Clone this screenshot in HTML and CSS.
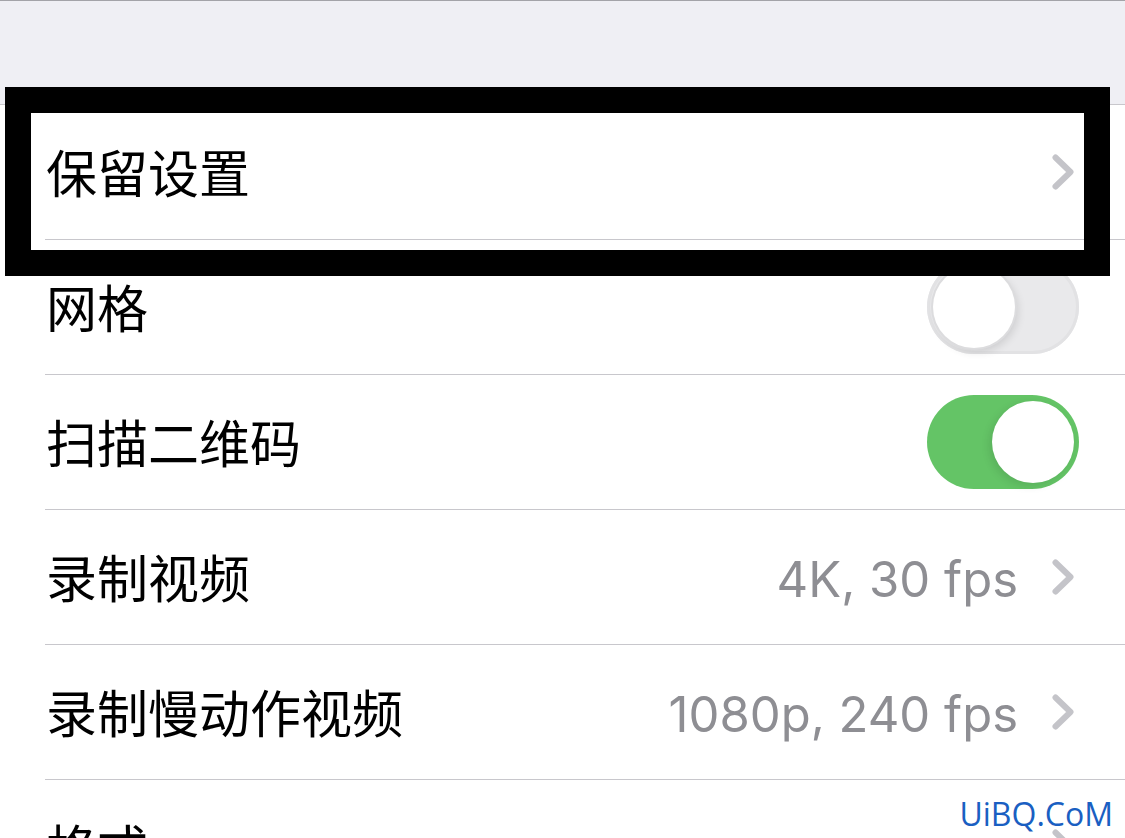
FILE: index.html
```html
<!DOCTYPE html>
<html lang="zh-CN">
<head>
<meta charset="utf-8">
<title>相机设置</title>
<link rel="stylesheet" href="styles.css">
</head>
<body>
<div class="screen">
  <div class="header"></div>
  <div class="list">
    <div class="row">
      <span class="label">保留设置</span>
      <span class="right">
        <svg class="chev" viewBox="0 0 22 36" width="22" height="36"><polyline points="3.5,3.5 18.5,18 3.5,32.5"/></svg>
      </span>
    </div>
    <div class="row">
      <span class="label">网格</span>
      <span class="right"><span class="toggle off"><span class="knob"></span></span></span>
    </div>
    <div class="row">
      <span class="label">扫描二维码</span>
      <span class="right"><span class="toggle on"><span class="knob"></span></span></span>
    </div>
    <div class="row">
      <span class="label">录制视频</span>
      <span class="right">
        <span class="value">4K, 30 fps</span>
        <svg class="chev" viewBox="0 0 22 36" width="22" height="36"><polyline points="3.5,3.5 18.5,18 3.5,32.5"/></svg>
      </span>
    </div>
    <div class="row">
      <span class="label">录制慢动作视频</span>
      <span class="right">
        <span class="value">1080p, 240 fps</span>
        <svg class="chev" viewBox="0 0 22 36" width="22" height="36"><polyline points="3.5,3.5 18.5,18 3.5,32.5"/></svg>
      </span>
    </div>
    <div class="row">
      <span class="label">格式</span>
      <span class="right">
        <svg class="chev" viewBox="0 0 22 36" width="22" height="36"><polyline points="3.5,3.5 18.5,18 3.5,32.5"/></svg>
      </span>
    </div>
  </div>
  <div class="highlight"></div>
  <div class="watermark">UiBQ.CoM</div>
</div>
</body>
</html>
```

FILE: styles.css
```css
html, body {
  margin: 0;
  padding: 0;
  background: #ffffff;
}

.screen {
  position: relative;
  width: 1125px;
  height: 838px;
  overflow: hidden;
  background: #ffffff;
  border-top: 1px solid #a3a3a8;
  box-sizing: border-box;
}

.header {
  height: 103px;
  background: #efeff4;
}

.list {
  border-top: 1px solid #c8c7cc;
  background: #ffffff;
}

.row {
  height: 134px;
  margin-left: 45px;
  padding-left: 1px;
  padding-right: 46px;
  border-bottom: 1px solid #c8c7cc;
  display: flex;
  align-items: center;
  justify-content: space-between;
}

.label {
  font-family: "Noto Sans CJK SC", sans-serif;
  font-size: 51px;
  color: #000000;
  line-height: 1;
  margin-top: -2px;
}

.right {
  display: flex;
  align-items: center;
  gap: 34px;
}

.value {
  font-family: Inter, "Liberation Sans", sans-serif;
  font-size: 49px;
  color: #8e8e93;
  line-height: 1;
  margin-top: 4px;
}

.chev {
  display: block;
  margin-right: 5px;
  fill: none;
  stroke: #c4c4c9;
  stroke-width: 6;
  stroke-linecap: round;
  stroke-linejoin: round;
}

.toggle {
  display: flex;
  align-items: center;
  width: 152px;
  height: 94px;
  border-radius: 47px;
  box-sizing: border-box;
  padding: 0 6px;
}

.toggle .knob {
  width: 82px;
  height: 82px;
  border-radius: 50%;
  background: #ffffff;
}

.toggle.off {
  background: #e9e9eb;
  box-shadow: inset 0 0 0 3px #e2e2e4;
  justify-content: flex-start;
}

.toggle.off .knob {
  box-shadow: 0 0 0 2px #dcdcde, 3px 4px 8px rgba(0, 0, 0, 0.12);
}

.toggle.on {
  background: #64c466;
  justify-content: flex-end;
  padding-right: 5px;
}

.toggle.on .knob {
  box-shadow: -3px 3px 8px rgba(0, 0, 0, 0.1);
}

.highlight {
  position: absolute;
  left: 5px;
  top: 86px;
  width: 1105px;
  height: 189px;
  border: 26px solid #000000;
  box-sizing: border-box;
}

.watermark {
  position: absolute;
  right: 12px;
  bottom: 8px;
  font-family: "Open Sans", "Liberation Sans", sans-serif;
  font-size: 32px;
  color: #1a5fc2;
  line-height: 1;
}
```
